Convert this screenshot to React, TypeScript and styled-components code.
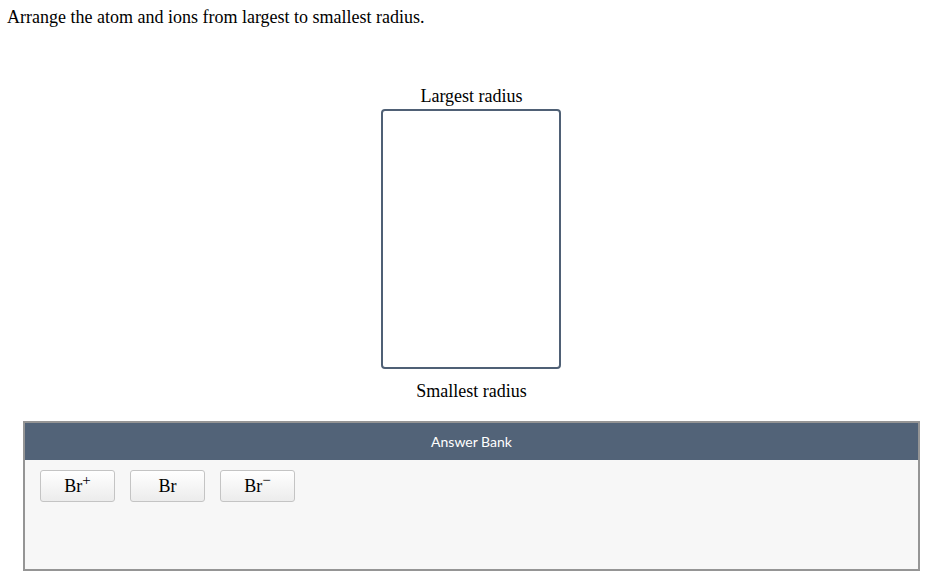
import React from "react";
import styled, { createGlobalStyle } from "styled-components";

const Global = createGlobalStyle`
  html, body { margin: 0; padding: 0; background: #ffffff; }
  body { font-family: "Liberation Serif", "Times New Roman", serif; color: #000; }
`;

const Page = styled.div`
  padding: 6px 0 0 7px;
`;

const Prompt = styled.p`
  margin: 0;
  font-size: 18px;
  line-height: 22px;
`;

const Stage = styled.div`
  margin: 57px 0 0 16px;
  width: 897px;
  display: flex;
  flex-direction: column;
  align-items: center;
`;

const Label = styled.div`
  font-size: 18px;
  line-height: 22px;
  text-align: center;
`;

const DropBox = styled.div`
  box-sizing: border-box;
  width: 180px;
  height: 260px;
  border: 2px solid #4f6075;
  border-radius: 4px;
  margin: 2px 1px 11px 0;
`;

const Bank = styled.div`
  box-sizing: border-box;
  align-self: stretch;
  margin-top: 19px;
  height: 150px;
  border: 2px solid #959595;
  background: #f7f7f7;
`;

const BankHeader = styled.div`
  height: 37px;
  background: #526378;
  color: #ffffff;
  font-family: Lato, "Open Sans", sans-serif;
  font-size: 14px;
  display: flex;
  align-items: center;
  justify-content: center;
`;

const Chips = styled.div`
  display: flex;
  gap: 15px;
  padding: 10px 15px;
`;

const Chip = styled.div`
  box-sizing: border-box;
  width: 75px;
  height: 32px;
  border: 1px solid #c4c4c4;
  border-radius: 3px;
  background: linear-gradient(#ffffff, #ececec);
  font-size: 18px;
  display: flex;
  align-items: center;
  justify-content: center;
`;

const Formula = styled.span`
  line-height: 20px;
`;

const Sup = styled.sup`
  font-size: 15px;
  line-height: 0;
  vertical-align: 7px;
`;

const chips: { base: string; charge?: string }[] = [
  { base: "Br", charge: "+" },
  { base: "Br" },
  { base: "Br", charge: "\u2212" },
];

export default function App() {
  return (
    <Page>
      <Global />
      <Prompt>Arrange the atom and ions from largest to smallest radius.</Prompt>
      <Stage>
        <Label>Largest radius</Label>
        <DropBox />
        <Label>Smallest radius</Label>
        <Bank>
          <BankHeader>Answer Bank</BankHeader>
          <Chips>
            {chips.map((c, i) => (
              <Chip key={i}>
                <Formula>
                  {c.base}
                  {c.charge && <Sup>{c.charge}</Sup>}
                </Formula>
              </Chip>
            ))}
          </Chips>
        </Bank>
      </Stage>
    </Page>
  );
}
